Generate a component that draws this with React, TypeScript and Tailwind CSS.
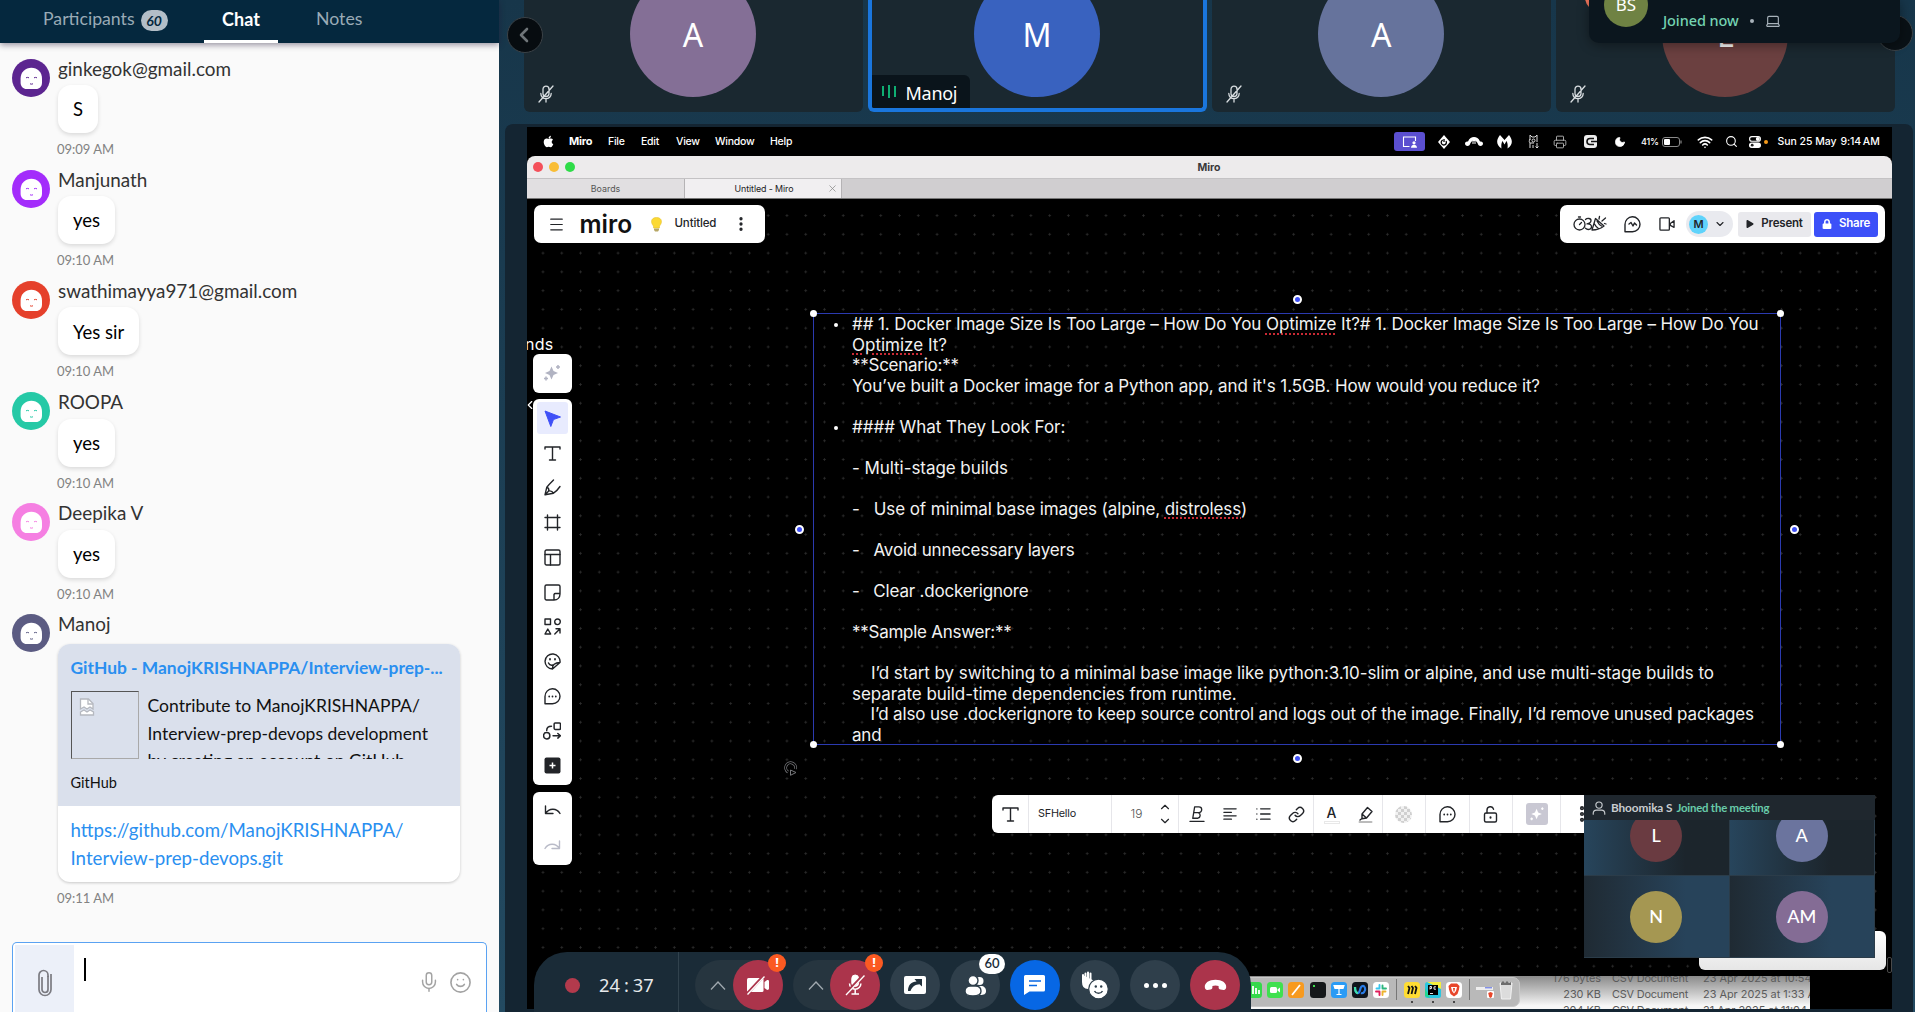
import React from "react";
import {
  ChevronLeft, ChevronUp, ChevronDown, Link, Mic, Smile, Moon, Wifi, Search, Printer,
  EllipsisVertical, X, Laptop,
} from "lucide-react";
import { FaApple, FaLock, FaPlay } from "react-icons/fa";

/* ---------- Chat sidebar ---------- */

const Avatar = ({ color }: { color: string }) => (
  <svg className="size-[38px] shrink-0" viewBox="0 0 38 38">
    <circle cx="19" cy="19" r="19" fill={color} />
    <path d="M8.600 19.500C8.600 13 13.500 8.800 19.400 8.800S30 13 30 19.500v4c0 4-2.500 6.500-6 6.500h-9.400c-3.500 0-6-2.500-6-6.500z" fill="#fff" />
    <path d="M14 18.800q1.500-.8 3 0M22 18.800q1.500-.8 3 0M18 24.800q1.400.7 3 0" stroke={color} strokeWidth="1" fill="none" />
  </svg>
);

const messages = [
  { name: "ginkegok@gmail.com", color: "#5c2590", text: "S", time: "09:09 AM" },
  { name: "Manjunath", color: "#a32cfb", text: "yes", time: "09:10 AM" },
  { name: "swathimayya971@gmail.com", color: "#e5402b", text: "Yes sir", time: "09:10 AM" },
  { name: "ROOPA", color: "#25c9a6", text: "yes", time: "09:10 AM" },
  { name: "Deepika V", color: "#f57fe2", text: "yes", time: "09:10 AM" },
];

function Sidebar() {
  return (
    <aside className="flex h-full w-[499px] shrink-0 flex-col bg-[#fafafa] font-['Lato',sans-serif]">
      <nav className="relative z-10 flex h-[43px] shrink-0 items-start bg-[#05283e] text-[17.700px] leading-[38px] text-[#9aabb6] shadow-[0_2px_6px_rgba(30,20,50,0.45)]">
        <div className="flex w-[204px] items-center pl-[43px]">
          Participants
          <span className="mt-[3px] ml-[6px] flex h-[21px] w-[27px] items-center justify-center rounded-full bg-[#b3bec7] text-[14px] font-bold text-[#05283e] italic">60</span>
        </div>
        <div className="flex h-[43px] w-[74px] justify-center rounded-t-sm border-b-[3px] border-white text-[18px] font-bold text-white">Chat</div>
        <div className="pl-[38px]">Notes</div>
      </nav>
      <div className="flex flex-col pt-[15.500px]">
        {messages.map((m) => (
          <div key={m.name} className="flex h-[111.200px] gap-[8.500px] pl-[11.500px]">
            <Avatar color={m.color} />
            <div className="flex flex-col items-start">
              <div className="h-[26.500px] text-[18.900px] leading-[20px] text-[#333]">{m.name}</div>
              <div className="flex h-[48px] items-center rounded-[13px] bg-white px-[15px] pt-[2px] text-[18.500px] text-black shadow-[0_2px_4px_rgba(0,0,0,0.13)]">{m.text}</div>
              <div className="-ml-px pt-[8px] text-[13px] leading-[17px] text-[#828282]">{m.time}</div>
            </div>
          </div>
        ))}
        <div className="flex gap-[8.500px] pl-[11.500px]">
          <Avatar color="#5b5b82" />
          <div className="flex flex-col items-start">
            <div className="h-[29.500px] text-[18.900px] leading-[20px] text-[#333]">Manoj</div>
            <div className="w-[402px] overflow-hidden rounded-[12px] bg-white shadow-[0_1px_3px_rgba(0,0,0,0.2)]">
              <div className="h-[162px] bg-[#dae0ec] px-[12.500px] pt-[12px]">
                <div className="text-[17.400px] leading-[24px] font-bold whitespace-nowrap text-[#2a8ff0]">GitHub - ManojKRISHNAPPA/Interview-prep-...</div>
                <div className="mt-[11px] flex h-[68px] gap-[9px] overflow-hidden">
                  <div className="size-[68px] shrink-0 border border-[#a9a9a9] border-t-[#555] border-l-[#555] p-[6px]">
                    <svg className="size-[18px]" viewBox="0 0 18 18">
                      <path d="M2.500 1h8l4.500 4.500V11l-3-2-3 2-3-2-3.500 2z" fill="#fff" stroke="#b5b8bf" strokeWidth="1.300" />
                      <path d="M10 1v5h5" fill="none" stroke="#b5b8bf" strokeWidth="1.300" />
                      <path d="M2.500 14l3.500-2 3 2 3-2 3.500 2v3h-13z" fill="#fff" stroke="#b5b8bf" strokeWidth="1.300" />
                    </svg>
                  </div>
                  <div className="pt-[1px] text-[17.550px] leading-[27.700px] whitespace-nowrap text-[#111]">
                    Contribute to ManojKRISHNAPPA/<br />Interview-prep-devops development<br />by creating an account on GitHub.
                  </div>
                </div>
                <div className="mt-[15px] text-[14.500px] leading-[18px] text-[#111]">GitHub</div>
              </div>
              <div className="h-[76px] px-[12.500px] pt-[11px] text-[18.700px] leading-[27.700px] text-[#2a8ff0]">
                https://github.com/ManojKRISHNAPPA/<br />Interview-prep-devops.git
              </div>
            </div>
            <div className="-ml-px pt-[8px] text-[13px] leading-[17px] text-[#828282]">09:11 AM</div>
          </div>
        </div>
      </div>
      <div className="mt-auto ml-[12px] flex h-[70px] w-[475px] shrink-0 rounded-t-[5px] border-[1.500px] border-b-0 border-[#5aa2f2] bg-white pt-[2px] pl-[2px]">
        <div className="flex w-[59px] items-start justify-center bg-[#ecf0f9] pt-[24px]">
          <svg className="h-[28px] w-[16px]" viewBox="0 0 16 28" fill="none" stroke="#7b7b82" strokeWidth="1.700">
            <path d="M11 7v13.500a3 3 0 0 1-6 0V8" />
            <path d="M14 5v15.500a6 6 0 0 1-12 0V6a4.500 4.500 0 0 1 9 0v2" />
          </svg>
        </div>
        <div className="mt-[13px] ml-[10px] h-[23px] w-[2px] bg-black" />
        <div className="mt-[26px] mr-[14px] ml-auto flex gap-[9px] text-[#a3a3a3]">
          <Mic size={22} strokeWidth={1.600} />
          <Smile size={23} strokeWidth={1.700} />
        </div>
      </div>
    </aside>
  );
}

/* ---------- Participant strip ---------- */

const MicOff = () => (
  <svg className="h-[18px] w-[16px]" viewBox="0 0 16 18" fill="none" stroke="#d8dde0" strokeWidth="1.300" strokeLinecap="round">
    <path d="M5 8V4.200a3 3 0 0 1 6 0V8.500a3 3 0 0 1-6 0M2.800 8.500a5.200 5.200 0 0 0 10.400 0M8 13.700V17M15 1L1 17" />
  </svg>
);

function Strip() {
  const tiles = [
    { l: "A", bg: "bg-[#846f96]" },
    { l: "M", bg: "bg-[#3962bf]" },
    { l: "A", bg: "bg-[#66739c]" },
    { l: "L", bg: "bg-[#6b4040]" },
  ];
  return (
    <div className="relative flex h-[112px] gap-[5.100px] pl-[24.500px] font-['Noto_Sans',sans-serif]">
      {tiles.map((t, i) => (
        <div key={i} className={"relative flex h-[112px] w-[339px] items-start justify-center overflow-hidden rounded-b-[6px] bg-[#1a2830] " + (i === 1 ? "border-[4px] border-t-0 border-[#1a76dd]" : "")}>
          <div className={"-mt-[29.500px] flex size-[126px] shrink-0 items-center justify-center rounded-full pt-[3px] text-[32px] text-white " + t.bg}>{t.l}</div>
          {i === 1 ? (
            <div className="absolute bottom-0 left-0 flex h-[33px] w-[98px] items-center rounded-tr-[6px] bg-[#0a141b] pt-[4px] pl-[10px] text-[18px] text-white">
              <span className="mr-[10px] flex items-center gap-[4px] pb-[5px]">
                <i className="h-[10px] w-[2px] bg-[#0fae72]" />
                <i className="h-[13px] w-[2px] bg-[#0fae72]" />
                <i className="h-[11px] w-[2px] bg-[#0fae72]" />
              </span>
              <span className="tracking-[-0.300px]">Manoj</span>
            </div>
          ) : (
            <div className="absolute bottom-[9px] left-[14.500px]"><MicOff /></div>
          )}
        </div>
      ))}
      <div className="absolute top-[17px] left-[8px] flex size-[36px] items-center justify-center rounded-full border border-[#3b4247] bg-[#070c10] text-[#6f7579]">
        <ChevronLeft size={24} strokeWidth={2.600} className="-ml-[2px]" />
      </div>
      <div className="absolute top-[15px] left-[1378px] size-[36px] rounded-full border border-[#3b4247] bg-[#0a1116]" />
      <div className="absolute -top-[18px] left-[1086px] size-[30px] rounded-full bg-[#f0745a]" />
      <div className="absolute top-0 left-[1090px] flex h-[43px] w-[311px] overflow-hidden rounded-b-[10px] bg-[#0b161e] shadow-[0_2px_12px_rgba(0,0,0,0.4)]">
        <div className="-mt-[17px] ml-[15px] flex size-[44px] shrink-0 items-center justify-center rounded-full bg-[#6f8243] text-[17px] text-white">BS</div>
        <div className="ml-[15px] flex h-[41px] items-center text-[14.500px] font-medium tracking-[-0.100px] text-[#74d3b2]">
          Joined now
          <span className="mx-[11px] size-[4px] rounded-full bg-[#a8b2ba]" />
          <Laptop size={16} strokeWidth={1.700} className="text-[#a8b2ba]" />
        </div>
      </div>
    </div>
  );
}

/* ---------- Shared desktop ---------- */

function MenuBar() {
  return (
    <div className="flex h-[29px] items-center bg-black text-[10.500px] font-medium tracking-[-0.250px] text-white">
      <FaApple size={13} className="ml-[15px]" />
      <span className="ml-[14px] w-[39px] text-[11px] font-bold">Miro</span>
      <span className="w-[33px]">File</span>
      <span className="w-[35px]">Edit</span>
      <span className="w-[39px]">View</span>
      <span className="w-[55px]">Window</span>
      <span>Help</span>
      <div className="mr-[12.500px] ml-auto flex items-center">
        <div className="flex h-[19px] w-[31px] items-center justify-center rounded-[3px] bg-[#5b4fd0]">
          <svg className="h-[12px] w-[16px]" viewBox="0 0 16 12" fill="none" stroke="#fff" strokeWidth="1.100">
            <path d="M7.500 10.500h-6V1h12v4" /><circle cx="12" cy="6.800" r="1.600" fill="#fff" stroke="none" /><path d="M9 11.800c0-4 6-4 6 0z" fill="#fff" stroke="none" />
          </svg>
        </div>
        <svg className="ml-[12px] size-[14px]" viewBox="0 0 14 14"><path d="M7 0l6 7-6 7-6-7z" fill="#fff" /><path d="M5.800 5A2.600 2.600 0 1 0 9 6M7 4v3" fill="none" stroke="#000" strokeWidth="1.300" /></svg>
        <svg className="ml-[14px] h-[11px] w-[18px]" viewBox="0 0 18 11" fill="#fff"><path d="M0 7.500C0 6 1.500 5.500 3 5.500 4.500 2 6.500 1 9 1s4.500 1 6 4.500c1.500 0 3 .5 3 2S17 10 15.500 10 13 9 12.500 7L10.500 4.500V8h-1V5h-1v3h-1V4.500L5.500 7C5 9 4 10 2.500 10S0 9 0 7.500z" /></svg>
        <svg className="ml-[14px] h-[14px] w-[15px]" viewBox="0 0 15 14" fill="#fff"><path d="M3 0c-4 5-4 10 1.500 13.500C4 10 4.500 8 5.500 6l2 3.500 2-3.500c1 2 1.500 4 1 7.500C16 10 16 5 12 0L7.500 5z" /></svg>
        <svg className="ml-[15.500px] h-[15px] w-[11px]" viewBox="0 0 11 15" fill="none" stroke="#ddd" strokeWidth="1"><path d="M2 6V1l2 2h3l2-2v5M2 5c-1 2-1 3 0 4v5M2 9h4M9 6v2M5 14v-3M9 9v5M7.500 12.500L9 14l1.500-1.500" /><circle cx="5.500" cy="6.500" r="1.500" /></svg>
        <Printer size={14} strokeWidth={1.500} className="ml-[14.500px] text-[#bbb]" />
        <svg className="ml-[16px] size-[15px]" viewBox="0 0 15 15"><rect x="1" y="1" width="13" height="13" rx="3" fill="#eee" /><path d="M11 4.500H7a3 3 0 0 0 0 6h4M14 7.500H8" fill="none" stroke="#111" strokeWidth="1.600" /></svg>
        <Moon size={12} fill="#fff" strokeWidth={1.500} className="mr-[-1px] ml-[16px]" />
        <span className="ml-[16px] w-[18px] text-[9px]">41%</span>
        <svg className="ml-[3px] h-[10px] w-[20px]" viewBox="0 0 20 10"><rect x=".5" y=".5" width="17" height="9" rx="2.500" fill="none" stroke="#8a8a8a" /><rect x="2" y="2" width="6" height="6" rx="1" fill="#fff" /><path d="M19 3.500v3" stroke="#8a8a8a" strokeWidth="1.200" /></svg>
        <Wifi size={16} strokeWidth={2.400} className="ml-[15px]" />
        <Search size={13} strokeWidth={2} className="ml-[12px]" />
        <svg className="ml-[10.500px] size-[12px]" viewBox="0 0 12 12"><rect x=".6" y=".6" width="10.800" height="4.600" rx="2.300" fill="none" stroke="#fff" strokeWidth="1.100" /><circle cx="8.800" cy="2.900" r="2" fill="#fff" /><rect x="0" y="6.500" width="12" height="5.500" rx="2.700" fill="#fff" /><circle cx="3.200" cy="9.200" r="1.400" fill="#222" /></svg>
        <span className="ml-[3px] size-[4px] rounded-full bg-[#f59a1b]" />
        <span className="ml-[10px] w-[63px] tracking-[-0.050px] whitespace-nowrap">Sun 25 May</span>
        <span className="w-[39px] tracking-[-0.100px] whitespace-nowrap [word-spacing:-1px]">9:14 AM</span>
      </div>
    </div>
  );
}

function WindowChrome() {
  return (
    <div className="h-[43px] overflow-hidden rounded-t-[8px] bg-[#edebec] text-[#3a383a]">
      <div className="flex h-[22px] items-center">
        <div className="flex w-[60px] gap-[6px] pl-[6px]">
          <i className="size-[10px] rounded-full bg-[#f4505a]" />
          <i className="size-[10px] rounded-full bg-[#f9bd35]" />
          <i className="size-[10px] rounded-full bg-[#2fdc48]" />
        </div>
        <span className="flex-1 pt-px pr-[61px] text-center text-[10.500px] font-bold">Miro</span>
      </div>
      <div className="flex h-[21px] border-t border-b border-t-[#c4c2c4] border-b-[#777] bg-[#d0ced0] text-[8.900px]">
        <div className="flex w-[158px] items-center justify-center border-r border-[#b5b3b5] bg-[#e1dfe1] text-[#555]">Boards</div>
        <div className="relative flex w-[157px] items-center justify-center border-r border-[#b5b3b5] bg-[#f1eff1] pl-[2px] tracking-[-0.100px] text-[#222]">
          Untitled - Miro
          <X size={11} strokeWidth={1.600} className="absolute right-[3px] text-[#888]" />
        </div>
      </div>
    </div>
  );
}

const Tool = ({ children, active }: { children: React.ReactNode; active?: boolean }) => (
  <div className="flex h-[34.750px] items-center justify-center text-[#222428]">
    <div className={"flex h-[32px] w-[31px] items-center justify-center rounded-[3px] " + (active ? "bg-[#e8ebfe]" : "")}>{children}</div>
  </div>
);

const S = ({ children, className = "size-[17px]" }: { children: React.ReactNode; className?: string }) => (
  <svg className={className} viewBox="0 0 17 17" fill="none" stroke="currentColor" strokeWidth="1.400" strokeLinejoin="round" strokeLinecap="round">{children}</svg>
);

const SparkleIcon = () => (
  <svg className="size-[18px]" viewBox="0 0 18 18" fill="#b1b3c2">
    <path d="M8.500 2.500l2 4.500L15 9l-4.500 2-2 4.500-2-4.500L2 9l4.500-2z" />
    <path d="M15 1v4M13 3h4M3 12.500v4M1 14.500h4" stroke="#b1b3c2" strokeWidth="1.500" />
  </svg>
);

const TIcon = () => <S><path d="M1 4V2h15v2M8.500 2v13M5.500 15h6" /></S>;

function LeftTools() {
  return (
    <div className="absolute top-[154.500px] left-[6px] flex w-[38.500px] flex-col gap-[6.500px]">
      <div className="flex h-[39px] items-center justify-center rounded-[6px] bg-white"><SparkleIcon /></div>
      <div className="flex h-[386px] flex-col rounded-[6px] bg-white pt-[2px]">
        <Tool active><svg className="size-[17px]" viewBox="0 0 17 17"><path d="M1 1l15.500 6-7 2.500L6.800 16.500z" fill="#3f50f7" stroke="#3f50f7" strokeLinejoin="round" /></svg></Tool>
        <Tool><TIcon /></Tool>
        <Tool><S><path d="M1 15.800L2.800 8.200C5 5.500 7 3.500 9.500 1M1 15.800l8.500-1.600C12 12.500 14 10.500 16 7.500M2.800 8.200c2 .8 2.200 2.500 1.900 3.800L1 15.800M4.700 12c1.800-.3 3.800.4 4.800 2.200" /></S></Tool>
        <Tool><S><path d="M3.500 1v15M13.500 1v15M1 3.500h15M1 13.500h15" /></S></Tool>
        <Tool><S><rect x="1" y="1" width="15" height="15" rx="1.500" /><path d="M1 5.500h15M6.500 5.500V16" /></S></Tool>
        <Tool><S><path d="M10 16H2.500A1.500 1.500 0 0 1 1 14.500v-12A1.500 1.500 0 0 1 2.500 1h12A1.500 1.500 0 0 1 16 2.500V10c0 3.500-2.500 6-6 6zM10 16v-5.500A1.500 1.500 0 0 1 11.500 9.500H16" /></S></Tool>
        <Tool><S><rect x="1" y="1" width="5.500" height="5.500" /><circle cx="13.500" cy="3.800" r="2.800" /><path d="M3.800 11l2.900 5H1zM10.800 16l5-5M12 10.800h4V15" /></S></Tool>
        <Tool><S><path d="M16 9.500A7.500 7.500 0 1 0 8.500 16zL8.500 16c-.5-4 2.500-6.500 7.500-6.500M4.500 10c.8 2 2.500 2.500 4.500 2" /><path d="M6 6v.5M11 6v.5" strokeWidth="1.800" /></S></Tool>
        <Tool><S><path d="M1 15.500V8.500a7.500 7.500 0 1 1 7.500 7.300H1z" /><path d="M5.200 8.500v.1M8.500 8.500v.1M11.800 8.500v.1" strokeWidth="1.800" /></S></Tool>
        <Tool><S className="size-[18px]"><rect x="10.500" y="1" width="6" height="6" rx="1" /><circle cx="3.500" cy="13" r="3" /><path d="M3.500 8c0-3 1.500-4 4.500-4M9.500 13h7M14 10.800l2.500 2.200-2.500 2.200" /></S></Tool>
        <Tool><svg className="size-[17px]" viewBox="0 0 17 17"><rect x=".5" y=".5" width="16" height="16" rx="2" fill="#222428" /><path d="M8.500 5.500v6M5.500 8.500h6" stroke="#fff" strokeWidth="1.500" /></svg></Tool>
      </div>
      <div className="flex h-[73px] flex-col rounded-[6px] bg-white pt-[2px]">
        <Tool><S><path d="M1.500 4v7.500H9M1.500 11.500C5 6 12.500 5.500 16 11.500" /></S></Tool>
        <Tool><S className="size-[17px] -scale-x-100 text-[#b9bbc8]"><path d="M1.500 4v7.500H9M1.500 11.500C5 6 12.500 5.500 16 11.500" /></S></Tool>
      </div>
    </div>
  );
}

const Bad = ({ children }: { children: React.ReactNode }) => (
  <span className="underline decoration-[#c92a35] decoration-dotted decoration-2 underline-offset-[3px]">{children}</span>
);

const lines: { t: React.ReactNode; b?: boolean; c: string }[] = [
  { t: <>## 1. Docker Image Size Is Too Large – How Do You <Bad>Optimize</Bad> It?# 1. Docker Image Size Is Too Large – How Do You</>, b: true, c: "tracking-[-0.093px]" },
  { t: <><Bad>Optimize</Bad> It?</>, c: "tracking-[0px]" },
  { t: "**Scenario:**", c: "tracking-[-0.260px]" },
  { t: "You’ve built a Docker image for a Python app, and it's 1.5GB. How would you reduce it?", c: "tracking-[-0.120px]" },
  { t: "", c: "" },
  { t: "#### What They Look For:", b: true, c: "tracking-[-0.050px]" },
  { t: "", c: "" },
  { t: "- Multi-stage builds", c: "tracking-[-0.060px]" },
  { t: "", c: "" },
  { t: <>-   Use of minimal base images (alpine, <Bad>distroless</Bad>)</>, c: "tracking-[-0.100px]" },
  { t: "", c: "" },
  { t: "-   Avoid unnecessary layers", c: "tracking-[-0.180px]" },
  { t: "", c: "" },
  { t: "-   Clear .dockerignore", c: "tracking-[-0.200px]" },
  { t: "", c: "" },
  { t: "**Sample Answer:**", c: "tracking-[-0.260px]" },
  { t: "", c: "" },
  { t: "    I’d start by switching to a minimal base image like python:3.10-slim or alpine, and use multi-stage builds to", c: "tracking-[-0.060px]" },
  { t: "separate build-time dependencies from runtime.", c: "tracking-[-0.070px]" },
  { t: "    I’d also use .dockerignore to keep source control and logs out of the image. Finally, I’d remove unused packages", c: "tracking-[-0.150px]" },
  { t: "and", c: "tracking-[-0.200px]" },
];

const Handle = ({ className }: { className: string }) => (
  <i className={"absolute size-[9px] rounded-full border-2 border-white bg-[#3f50f7] " + className} />
);
const Corner = ({ className }: { className: string }) => (
  <i className={"absolute size-[7px] rounded-full bg-white " + className} />
);

function TextBlock() {
  return (
    <div className="absolute top-[114px] left-[286px] h-[432px] w-[968px] border border-[#2b3ab0] text-[#f2f2f2]">
      <div className="pl-[38px]">
        {lines.map((l, i) => (
          <div key={i} className={"relative h-[20.550px] text-[17px] leading-[20.550px] whitespace-pre " + l.c}>
            {l.b && <i className="absolute top-[9px] -left-[18px] size-[4px] rounded-full bg-white" />}
            {l.t}
          </div>
        ))}
      </div>
      <Corner className="-top-[4px] -left-[4px]" />
      <Corner className="-top-[4px] -right-[4px]" />
      <Corner className="-bottom-[4px] -left-[4px]" />
      <Corner className="-right-[4px] -bottom-[4px]" />
      <Handle className="-top-[19px] left-[479px]" />
      <Handle className="-bottom-[19px] left-[479px]" />
      <Handle className="top-[211px] -left-[19px]" />
      <Handle className="top-[211px] -right-[19px]" />
    </div>
  );
}

const Cell = ({ w, children }: { w: string; children: React.ReactNode }) => (
  <div className={"flex h-full shrink-0 items-center justify-center border-r border-[#e6e6ea] " + w}>{children}</div>
);

function FormatBar() {
  return (
    <div className="absolute top-[596px] left-[464.500px] flex h-[38px] w-[600px] items-center rounded-[6px] bg-white text-[#222428]">
      <Cell w="w-[37px] pl-[2px]"><TIcon /></Cell>
      <Cell w="w-[83px]"><span className="w-[63px] text-[10.800px] tracking-[-0.200px]">SFHello</span></Cell>
      <Cell w="w-[67px]">
        <span className="mr-[16px] ml-[14px] text-[12px] font-light text-[#555]">19</span>
        <span className="flex flex-col"><ChevronUp size={14} strokeWidth={2} /><ChevronDown size={14} strokeWidth={2} /></span>
      </Cell>
      <Cell w="w-[135px] pl-[2px]">
        <span className="flex items-center gap-[17px]">
          <S className="size-[16px]"><path d="M1 16.300h15M6 1h4.500a3 3 0 0 1 0 6H5zM5 7h5a3.200 3.200 0 0 1-.5 6H4zM6 1L4 13" /></S>
          <S className="size-[16px]"><path d="M2 3h13M2 6.700h8M2 10.400h13M2 14h8" /></S>
          <S className="size-[16px]"><path d="M2 3v.1M2 8.500v.1M2 14v.1M6 3h10M6 8.500h10M6 14h10" /></S>
          <Link size={17} strokeWidth={2} />
        </span>
      </Cell>
      <Cell w="w-[69px] pl-[2px]">
        <span className="flex items-center gap-[17px]">
          <span className="flex flex-col items-center text-[14px] leading-[16px] font-medium">A<i className="h-[3px] w-[16px] border border-[#e8e8e8]" /></span>
          <S><path d="M2.500 16h12" stroke="#bbb" strokeWidth="2" /><path d="M5 8l5.500-6.500L15 5.500 9.500 12l-4.500.8zM5 8l4.500 4M3 14l2-1.500" /></S>
        </span>
      </Cell>
      <Cell w="w-[43.500px]">
        <i className="size-[17px] rounded-full bg-[#e3e3e3] bg-[repeating-conic-gradient(#d0d0d0_0_25%,#f1f1f1_0_50%)] bg-[length:6px_6px]" />
      </Cell>
      <Cell w="w-[43.500px]"><S><path d="M1 15.500V8.500a7.500 7.500 0 1 1 7.500 7.300H1z" /><path d="M5.200 8.500v.1M8.500 8.500v.1M11.800 8.500v.1" strokeWidth="1.800" /></S></Cell>
      <Cell w="w-[43.500px]"><S><rect x="2.500" y="7" width="12" height="9" rx="1.500" /><path d="M5 7V4a3.300 3.300 0 0 1 6.500-.8" /><path d="M8.500 11.300v.4" strokeWidth="2" /></S></Cell>
      <Cell w="w-[48px]">
        <span className="flex size-[22px] items-center justify-center rounded-[3px] bg-[#c9c8d3]">
          <svg className="size-[16px]" viewBox="0 0 18 18" fill="#fff"><path d="M8.500 3l1.800 4.200L14.500 9l-4.200 1.800L8.500 15l-1.800-4.200L2.500 9l4.200-1.800z" /><path d="M15 1.500v3M13.500 3h3M3 13v3M1.500 14.500h3" stroke="#fff" strokeWidth="1.200" /></svg>
        </span>
      </Cell>
      <EllipsisVertical size={20} strokeWidth={3} className="ml-[11px] shrink-0" />
    </div>
  );
}

const PipTile = ({ l, c, bg, top }: { l: string; c: string; bg: string; top?: boolean }) => (
  <div className={"flex justify-center overflow-hidden border-r border-b border-[#2b3c49] " + bg}>
    <span className={"flex size-[52px] shrink-0 items-center justify-center rounded-full text-[18px] font-medium " + c + (top ? " -mt-[10.500px]" : " mt-[14.500px]")}>{l}</span>
  </div>
);

function Pip() {
  return (
    <div className="absolute top-[596px] left-[1057px] grid h-[163px] w-[291px] grid-cols-2 grid-rows-[25px_56px_82px] font-['Lato',sans-serif] text-white">
      <div className="col-span-2 flex items-center bg-[#1f272e] pl-[8px] text-[11.800px] tracking-[-0.100px] text-[#c9cdd0]">
        <S className="mr-[5px] size-[14px]"><circle cx="8.500" cy="5" r="3.800" /><path d="M1.500 16v-1c0-3 2-4 4-4h6c2 0 4 1 4 4v1" /></S>
        <b className="mr-[4px] font-bold">Bhoomika S</b>
        <span className="text-[11.400px] font-bold tracking-[-0.200px] text-[#68cba9]">Joined the meeting</span>
      </div>
      <PipTile l="L" c="bg-[#6a3b41]" bg="bg-linear-to-r from-[#27455c] to-[#1c252c] to-70%" top />
      <PipTile l="A" c="bg-[#6b749e]" bg="bg-linear-to-r from-[#27455c] to-[#1c252c] to-70%" top />
      <PipTile l="N" c="bg-[#a59752]" bg="bg-linear-to-r from-[#1f2a33] to-[#27435a] to-70%" />
      <PipTile l="AM" c="bg-[#846c95]" bg="bg-linear-to-r from-[#1f2a33] to-[#27435a] to-70%" />
    </div>
  );
}

function TopLeftBar() {
  return (
    <div className="absolute top-[6px] left-[6.500px] flex h-[38px] w-[231px] items-center rounded-[7px] bg-white text-[#222428]">
      <S className="ml-[15px] size-[15px]"><path d="M2 2.500h13M2 8.500h13M2 14.500h13" /></S>
      <span className="ml-[16px] w-[54px] text-[24.500px] leading-none font-semibold text-[#111]">miro</span>
      <svg className="ml-[17px] h-[15px] w-[11px]" viewBox="0 0 11 15"><path d="M5.500.5c6 0 6 5.500 3 8.500v2h-6V9c-3-3-3-8.500 3-8.500z" fill="#fbd934" stroke="#e0bb2a" strokeWidth=".5" /><path d="M3 11.500h5v1.500l-1 1.500H4L3 13z" fill="#b7a765" /></svg>
      <span className="ml-[13px] w-[44px] text-[11.500px] font-medium tracking-[-0.150px]">Untitled</span>
      <EllipsisVertical size={18} strokeWidth={2.400} className="ml-[13px]" />
    </div>
  );
}

function TopRightBar() {
  return (
    <div className="absolute top-[6px] left-[1033px] flex h-[38px] w-[325px] items-center rounded-[7px] bg-white text-[#222428]">
      <svg className="ml-[13px] h-[18px] w-[34px]" viewBox="0 0 34 18" fill="none" stroke="#222428" strokeWidth="1.300" strokeLinecap="round" strokeLinejoin="round">
        <circle cx="6.500" cy="9.500" r="5.500" /><path d="M6.500 9.500l2-2M5.500 2h2" />
        <path d="M12.500 4.500C14 3 18 3 18 5.500c0 2-2 3-4 3.300 3-.3 4.500 1 4.500 3 0 3-4 3.500-6 1.500" />
        <path d="M19 15l3.500-11.500L31 11c-3 2.500-7 4-12 4zM21.500 9c1 2 2 3.500 4 4.500M24 6c1 2 2.500 4 4.500 5M26 4l.5-2.500M29 6l3.500-3M31.500 8.500l1.500.5" />
      </svg>
      <S className="ml-[16.500px] size-[17px]"><path d="M1 15.500V8.500a7.500 7.500 0 1 1 7.500 7.300H1z" /><path d="M5 8l2-1.500 2 3.500 1.500-3L12.500 9" /></S>
      <S className="ml-[18.500px] size-[16px]"><rect x="1" y="2" width="10" height="13" rx="1" /><path d="M12 8l4-3v7l-4-2z" /></S>
      <div className="ml-[11px] flex h-[26px] w-[47px] items-center rounded-full bg-[#e9eaef] pl-[3px]">
        <span className="flex size-[19px] items-center justify-center rounded-full bg-[#5fd3fb] text-[11px] font-semibold">M</span>
        <ChevronDown size={12} strokeWidth={2.200} className="ml-[6px]" />
      </div>
      <div className="ml-[5px] flex h-[25px] w-[73px] items-center justify-center gap-[7px] rounded-[3px] bg-[#e9e9ed] text-[11.500px] font-semibold tracking-[-0.200px]">
        <FaPlay size={8} />Present
      </div>
      <div className="ml-[3px] flex h-[25px] w-[64px] items-center justify-center gap-[7px] rounded-[3px] bg-[#3c50f8] text-[11.500px] font-semibold tracking-[-0.200px] text-white">
        <FaLock size={10} />Share
      </div>
    </div>
  );
}

function Canvas() {
  return (
    <div className="relative h-[777px] overflow-hidden bg-black bg-[radial-gradient(circle,#2c2c2c_0_0.9px,transparent_1.300px)] bg-[length:18.770px_18.770px] bg-position-[6.600px_7.200px]">
      <TextBlock />
      <span className="absolute top-[133px] -left-[2px] text-[16px] leading-[24px] tracking-[0.200px] text-white">nds</span>
      <ChevronLeft size={14} strokeWidth={2} className="absolute top-[199px] -left-[4px] text-white" />
      <LeftTools />
      <svg className="absolute top-[562px] left-[256px] size-[15px]" viewBox="0 0 15 15" fill="none">
        <path d="M5 11A5 5 0 1 1 12.500 8" stroke="#77787c" strokeWidth="2.800" />
        <path d="M5 11A5 5 0 1 1 12.500 8" stroke="#000" strokeWidth="1.400" />
        <path d="M7.500 9l5.500 2.500-5.500 2.800z" stroke="#77787c" fill="#000" />
      </svg>
      <TopLeftBar />
      <TopRightBar />
      <div className="absolute top-[732px] left-[1172px] h-[39px] w-[187px] rounded-[6px] bg-linear-to-b from-white to-[#e6e6e6]" />
      <div className="absolute top-[758px] left-[1360px] h-[16px] w-[5px] rounded-[2px] border border-[#4a4a4a]" />
      <FormatBar />
      <Pip />
    </div>
  );
}

function Dock() {
  const box = "size-[16px] shrink-0";
  const files = [
    ["176 bytes", "23 Apr 2025 at 10:54 PM"],
    ["230 KB", "23 Apr 2025 at 1:33 AM"],
    ["204 KB", "21 Apr 2025 at 11:04 AM"],
  ];
  return (
    <div className="relative flex h-[33px] justify-end overflow-hidden bg-black pr-[82px]">
      <div className="flex h-full w-[960px] justify-end bg-linear-to-b from-[#8b8b8b] to-[#f7f7f7] to-90%">
        <div className="mt-[-5.500px] w-[268px] overflow-hidden text-[10.900px] text-[#5b5b5b]">
          {files.map(([a, d]) => (
            <div key={a} className="flex h-[16px] items-center whitespace-nowrap">
              <span className="w-[59px] shrink-0 text-right">{a}</span>
              <span className="ml-[11px] w-[91px] shrink-0 tracking-[-0.200px]">CSV Document</span>
              <span>{d}</span>
            </div>
          ))}
        </div>
      </div>
      <div className="absolute top-px left-[600px] flex h-[30px] w-[393px] items-center rounded-r-[7px] border border-[#c9c9c9] bg-[#b9b9b9] pb-[5px] pl-[118px]">
        <div className="flex items-center gap-[5.200px]">
          <svg className={box} viewBox="0 0 16 16"><rect width="16" height="16" rx="3.500" fill="#35d94b" /><path d="M4 12V8M7 12V4M10 12V6M13 12V8" stroke="#fff" strokeWidth="1.800" /></svg>
          <svg className={box} viewBox="0 0 16 16"><rect width="16" height="16" rx="3.500" fill="#3fe04f" /><rect x="3" y="5" width="7" height="6" rx="1.500" fill="#fff" /><path d="M10.500 7.500l2.500-2v5l-2.500-2z" fill="#fff" /></svg>
          <svg className={box} viewBox="0 0 16 16"><rect width="16" height="16" rx="3.500" fill="#f79a1e" /><path d="M4 13l8-10" stroke="#fff" strokeWidth="1.800" /></svg>
          <svg className={box} viewBox="0 0 16 16"><rect width="16" height="16" rx="3.500" fill="#15181a" /><path d="M3 4h2" stroke="#3fe04f" strokeWidth="2" /></svg>
          <svg className={box} viewBox="0 0 16 16"><rect width="16" height="16" rx="3.500" fill="#2a9bf5" /><path d="M3 3.500h10l-1 3H4zM8 7v5M5.500 12.500h5" stroke="#fff" fill="#fff" strokeWidth="1.200" /></svg>
          <svg className={box} viewBox="0 0 16 16"><rect width="16" height="16" rx="3.500" fill="#10151c" /><path d="M3 5c0 7 4 8 5 3s4-5 5-2-2 6-4 5" stroke="#2a7de8" strokeWidth="2.200" fill="none" /><path d="M3 5c0 4 1.500 6 3 6" stroke="#3fe0a8" strokeWidth="2.200" fill="none" /></svg>
          <svg className={box} viewBox="0 0 16 16"><rect width="16" height="16" rx="3.500" fill="#fff" /><g strokeWidth="1.900" strokeLinecap="round"><path d="M6.500 3v3.500M3.500 6.500h3" stroke="#36c5f0" /><path d="M9.500 3.500v3M9.500 6.500H13" stroke="#2eb67d" /><path d="M9.500 9.500V13M9.500 9.500h3" stroke="#ecb22e" /><path d="M6.500 9.500V13M3 9.500h3.500" stroke="#e01e5a" /></g></svg>
          <i className="mr-px ml-[2px] h-[21px] w-px bg-[#777]" />
          <svg className="h-[22px] w-[16px] shrink-0 translate-y-[3px]" viewBox="0 0 16 22"><rect width="16" height="16" rx="3.500" fill="#ffdd33" /><path d="M4 4l1.500 2L4 12M7.500 4L9 6l-1.500 6M11 4l1.500 2-1.500 6" stroke="#111" strokeWidth="1.800" fill="none" /><circle cx="8" cy="20" r="1" fill="#222" /></svg>
          <svg className="h-[22px] w-[16px] shrink-0 translate-y-[3px]" viewBox="0 0 16 22"><rect width="16" height="16" rx="2.500" fill="#29c6e0" /><path d="M2 0h14v7z" fill="#f6ef3d" /><path d="M0 6v8l5 2z" fill="#22d88f" /><rect x="3" y="3" width="10" height="10" fill="#000" /><path d="M5 7.500V4.500h1.500v2H5M11 4.800H9v2.400h2M5 11.500h3" stroke="#fff" strokeWidth=".9" fill="none" /><circle cx="8" cy="20" r="1" fill="#222" /></svg>
          <svg className="h-[22px] w-[16px] shrink-0 translate-y-[3px]" viewBox="0 0 16 22"><rect width="16" height="16" rx="3.500" fill="#fff" /><path d="M5 1.500h6L13.500 4 13 7.500 11.500 12 8 14.500 4.500 12 3 7.500 2.500 4z" fill="#e8462a" /><path d="M5 5h6l-1 4-2 2.500L6 9z" fill="#fff" /><path d="M7 6h2l-.5 3.500h-1z" fill="#e8462a" /><circle cx="8" cy="20" r="1" fill="#222" /></svg>
          <i className="mr-px ml-[2px] h-[21px] w-px bg-[#777]" />
          <svg className="size-[18px] shrink-0" viewBox="0 0 18 18"><rect x="0" y="6" width="17" height="3" fill="#eee" /><path d="M9 6.800h7" stroke="#5469e6" /><rect x="11" y="10" width="7" height="7" rx="1" fill="#fff" /><path d="M14.500 11l2.300 1-1 4-1.300 1-1.300-1-1-4z" fill="#e8462a" /></svg>
          <svg className="h-[20px] w-[14px] shrink-0" viewBox="0 0 14 20"><path d="M1 3h12l-1.500 16h-9z" fill="#dcdcdc" stroke="#f2f2f2" /><path d="M2 3l2-2 2 2 2-2 2 2 2-1v3H2z" fill="#6d6d6d" /></svg>
        </div>
      </div>
    </div>
  );
}

/* ---------- Call controls ---------- */

const Round = ({ bg, children }: { bg: string; children: React.ReactNode }) => (
  <div className={"flex size-[50px] shrink-0 items-center justify-center rounded-full text-white " + bg}>{children}</div>
);
const Alert = () => <span className="absolute -top-[6px] -right-[3px] flex size-[18px] items-center justify-center rounded-full bg-[#fb5a22] text-[13px] font-bold text-white">!</span>;

function Controls() {
  return (
    <div className="absolute top-[952px] left-[35px] flex h-[60px] w-[717px] items-start rounded-t-[33px] bg-[#1a2b37] pt-[8px] font-['Noto_Sans',sans-serif]">
      <div className="-mt-[8px] flex h-[66px] w-[144.500px] items-center border-r border-[#31424d] text-[18.300px] text-[#e6e9eb]">
        <i className="ml-[31px] size-[15px] rounded-full bg-[#b33a4c]" />
        <span className="ml-[19px]">24</span><span className="px-[4px]">:</span><span>37</span>
      </div>
      <div className="relative ml-[16.500px] flex h-[50px] w-[88px] items-center rounded-full bg-[#26353f]">
        <svg className="mr-auto ml-[15px] h-[9px] w-[16px]" viewBox="0 0 16 9" fill="none" stroke="#a0a9af" strokeWidth="1.300"><path d="M1 8.500L8 1l7 7.500" /></svg>
        <Round bg="bg-[#ab344b]">
          <svg className="h-[20px] w-[24px]" viewBox="0 0 24 20" fill="#fff"><rect x="1" y="3" width="16.500" height="14" rx="1.500" /><path d="M18.500 7l2-1.500c1-.8 2.500-.3 2.500 1v7c0 1.300-1.500 1.800-2.500 1l-2-1.500z" /><path d="M18 .5L1 19" stroke="#ab344b" strokeWidth="3" /><path d="M18.500 1.500L1.500 19.500" stroke="#fff" strokeWidth="1.300" /></svg>
        </Round>
        <Alert />
      </div>
      <div className="relative ml-[10px] flex h-[50px] w-[87px] items-center rounded-full bg-[#26353f]">
        <svg className="mr-auto ml-[15px] h-[9px] w-[16px]" viewBox="0 0 16 9" fill="none" stroke="#a0a9af" strokeWidth="1.300"><path d="M1 8.500L8 1l7 7.500" /></svg>
        <Round bg="bg-[#ab344b]">
          <svg className="h-[22px] w-[22px]" viewBox="0 0 22 22" fill="none" stroke="#fff"><rect x="7.800" y="1" width="6.800" height="11.500" rx="3.400" fill="#fff" /><path d="M5.500 9.500a5.700 5.700 0 0 0 11.400 0M11.200 15v4.500M7.500 20h7.500" strokeWidth="1.500" /><path d="M20 .5L1.500 20" stroke="#ab344b" strokeWidth="3" /><path d="M20.500 1.500L2 21" strokeWidth="1.300" /></svg>
        </Round>
        <Alert />
      </div>
      <div className="ml-[10px] flex gap-[10px]">
        <Round bg="bg-[#2f3f4b]">
          <svg className="size-[22px]" viewBox="0 0 22 22"><rect x="0" y="2" width="22" height="18" rx="2" fill="#fff" /><path d="M4 17c0-6 3.500-9.500 8.500-9.500L10.500 5H18v7.500l-2.500-2.300C11.500 10.500 8 12.500 6.500 17z" fill="#22313c" /></svg>
        </Round>
        <div className="relative">
          <Round bg="bg-[#2f3f4b]">
            <svg className="size-[23px]" viewBox="0 0 23 23" fill="#fff"><circle cx="15.500" cy="7" r="4" /><path d="M13 12h4c3 0 5 2 5 5s-2 4-6 4h-3z" /><g stroke="#2f3f4b" strokeWidth="1.400"><circle cx="9" cy="6.500" r="5" /><path d="M6.500 12h5c3.500 0 5.500 2 5.500 5.300 0 3.500-2.500 4.700-8 4.700s-8-1.200-8-4.700C1 14 3 12 6.500 12z" /></g></svg>
          </Round>
          <span className="absolute -top-[6px] left-[29px] flex h-[20px] w-[26px] items-center justify-center rounded-full bg-white font-['Lato',sans-serif] text-[13px] font-semibold text-[#1a2b37]">60</span>
        </div>
        <Round bg="bg-[#0767e4]">
          <svg className="size-[22px]" viewBox="0 0 22 22"><path d="M1.500 1h18a1.500 1.500 0 0 1 1.500 1.500V16a1.500 1.500 0 0 1-1.500 1.500H5.500L0 21V2.500A1.500 1.500 0 0 1 1.500 1z" fill="#fff" /><path d="M5 7h12M5 11.500h8" stroke="#0767e4" strokeWidth="1.500" /></svg>
        </Round>
        <Round bg="bg-[#2f3f4b]">
          <svg className="h-[28px] w-[28px]" viewBox="0 0 28 28"><path d="M2 4v7c0 4 2 6 5 6s4.500-2 5-4l1.500-3M4.500 10V2.500M7 10V1.500M9.500 10V2.500" stroke="#fff" strokeWidth="2" strokeLinecap="round" fill="#fff" /><circle cx="17.500" cy="18" r="9.800" fill="#fff" stroke="#2f3f4b" strokeWidth="1.200" /><path d="M13.500 20c1.500 3 6.500 3 8 0" stroke="#2f3f4b" strokeWidth="1.500" fill="none" /><circle cx="14.800" cy="15.500" r="1.200" fill="#2f3f4b" /><circle cx="20.200" cy="15.500" r="1.200" fill="#2f3f4b" /></svg>
        </Round>
        <Round bg="bg-[#2f3f4b]">
          <span className="flex gap-[4px]"><i className="size-[5px] rounded-full bg-white" /><i className="size-[5px] rounded-full bg-white" /><i className="size-[5px] rounded-full bg-white" /></span>
        </Round>
        <Round bg="bg-[#ab344b]">
          <svg className="h-[12px] w-[23px]" viewBox="0 0 23 12"><path d="M.8 8C.5 4 5 .8 11.500.8S22.500 4 22.200 8c-.1 1.800-.9 3-2.700 2.900l-3-.3c-1.300-.2-1.900-1-1.900-2.300V7c-1.900-.8-4.300-.8-6.200 0v1.300c0 1.300-.6 2.100-1.900 2.300l-3 .3C1.700 11 .9 9.800.8 8z" fill="#fff" /></svg>
        </Round>
      </div>
    </div>
  );
}

export default function App() {
  return (
    <div className="flex h-[1012px] w-[1915px] overflow-hidden bg-[#18384c]">
      <Sidebar />
      <main className="relative flex min-w-0 flex-1 flex-col overflow-hidden bg-linear-to-b from-[#17364a] to-[#234a61]">
        <Strip />
        <div className="mt-[12px] ml-[6px] flex h-[888px] w-[1408px] flex-col rounded-t-[8px] bg-[#142532] pt-[3px] pl-[22px]">
          <div className="w-[1365px] overflow-hidden bg-black font-['Inter',sans-serif]">
            <MenuBar />
            <WindowChrome />
            <Canvas />
            <Dock />
          </div>
        </div>
        <Controls />
      </main>
    </div>
  );
}
